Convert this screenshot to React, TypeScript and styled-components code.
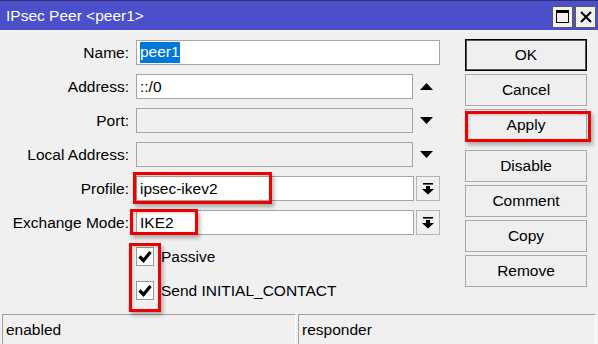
import styled, { createGlobalStyle } from "styled-components";

const GlobalStyle = createGlobalStyle`
  html, body {
    margin: 0;
    padding: 0;
    background: #f0f0f0;
  }
  body {
    font-family: "Liberation Sans", Arial, sans-serif;
    font-size: 15.5px;
    color: #000;
  }
`;

const Window = styled.div`
  position: relative;
  width: 598px;
  height: 344px;
  display: flex;
  flex-direction: column;
  background: #f0f0f0;
  overflow: hidden;
`;

const TitleBar = styled.div`
  height: 30px;
  flex: none;
  display: flex;
  align-items: center;
  justify-content: space-between;
  padding: 0 2px 0 6px;
  background: #4b4fc9;
  border-top: 1px solid #2e2f6e;
  box-sizing: border-box;
  color: #fff;
`;

const TitleText = styled.span`
  font-size: 15.5px;
`;

const WinButtons = styled.div`
  display: flex;
  gap: 2px;
  margin-top: 2px;
`;

const WinButton = styled.div`
  width: 21px;
  height: 22px;
  box-sizing: border-box;
  background: #f0f0f0;
  border: 1px solid #5a5a5a;
  display: flex;
  align-items: center;
  justify-content: center;
`;

const Body = styled.div`
  flex: 1;
  display: flex;
  padding: 10px 0 0 0;
`;

const Form = styled.div`
  width: 440px;
  display: flex;
  flex-direction: column;
  gap: 9px;
`;

const Row = styled.div`
  display: flex;
  align-items: center;
  height: 25px;
`;

const Label = styled.div`
  width: 129px;
  margin-right: 7px;
  text-align: right;
  white-space: nowrap;
`;

const Field = styled.div<{ $width: number; $disabled?: boolean }>`
  width: ${(p) => p.$width}px;
  height: 25px;
  box-sizing: border-box;
  border: 1px solid #a5a5a5;
  background: ${(p) => (p.$disabled ? "#f0f0f0" : "#fff")};
  display: flex;
  align-items: center;
  padding-left: 3px;
  white-space: nowrap;
`;

const Selected = styled.span`
  background: #0078d7;
  color: #fff;
  padding: 1px 0 2px;
`;

const ArrowSlot = styled.div`
  width: 27px;
  height: 25px;
  display: flex;
  align-items: center;
  justify-content: center;
`;

const DropButton = styled.div`
  width: 24px;
  height: 25px;
  margin-left: 2px;
  box-sizing: border-box;
  border: 1px solid #b5b5b5;
  background: #f0f0f0;
  display: flex;
  align-items: center;
  justify-content: center;
`;

const CheckRow = styled.div`
  display: flex;
  align-items: center;
  height: 25px;
  padding-left: 136px;
  gap: 7px;
`;

const CheckBox = styled.div`
  width: 18px;
  height: 19px;
  box-sizing: border-box;
  border: 1px solid #999;
  background: #fff;
  display: flex;
  align-items: center;
  justify-content: center;
`;

const Buttons = styled.div`
  margin-left: 25px;
  margin-top: -1px;
  width: 122px;
  display: flex;
  flex-direction: column;
  gap: 3px;
`;

const Button = styled.div<{ $default?: boolean; $spaced?: boolean }>`
  height: 32px;
  box-sizing: border-box;
  border: 1px solid ${(p) => (p.$default ? "#000" : "#a8a8a8")};
  box-shadow: ${(p) => (p.$default ? "inset 0 0 0 1px #555" : "none")};
  background: #efefef;
  display: flex;
  align-items: center;
  justify-content: center;
  margin-top: ${(p) => (p.$spaced ? "6px" : "0")};
`;

const StatusBar = styled.div`
  height: 30px;
  flex: none;
  display: flex;
  gap: 2px;
  padding: 0 2px 0 2px;
  box-sizing: border-box;
`;

const StatusPanel = styled.div<{ $width: number }>`
  width: ${(p) => p.$width}px;
  box-sizing: border-box;
  border-top: 1px solid #a0a0a0;
  border-left: 1px solid #a0a0a0;
  border-right: 1px solid #fff;
  display: flex;
  align-items: center;
  padding-left: 3px;
`;

const Highlight = styled.div<{ $x: number; $y: number; $w: number; $h: number }>`
  position: absolute;
  left: ${(p) => p.$x}px;
  top: ${(p) => p.$y}px;
  width: ${(p) => p.$w}px;
  height: ${(p) => p.$h}px;
  box-sizing: border-box;
  border: 3px solid #ee0000;
  box-shadow: 2px 3px 4px rgba(0, 0, 0, 0.3), inset 1px 1px 3px rgba(0, 0, 0, 0.2);
  pointer-events: none;
`;

const Triangle = ({ up }: { up?: boolean }) => (
  <svg width="13" height="7" viewBox="0 0 13 7">
    <polygon points={up ? "0,7 13,7 6.5,0" : "0,0 13,0 6.5,7"} fill="#000" />
  </svg>
);

const DropIcon = () => (
  <svg width="12" height="12" viewBox="0 0 12 12">
    <rect x="1" y="0" width="10" height="1.6" fill="#000" />
    <rect x="4" y="3" width="4" height="3" fill="#000" />
    <polygon points="0,6 12,6 6,11.5" fill="#000" />
  </svg>
);

const Check = () => (
  <svg width="14" height="13" viewBox="0 0 14 13">
    <path d="M1.5 6.5 L5.5 10.5 L12.5 2" stroke="#000" strokeWidth="3.2" fill="none" />
  </svg>
);

function App() {
  return (
    <Window>
      <GlobalStyle />
      <TitleBar>
        <TitleText>IPsec Peer &lt;peer1&gt;</TitleText>
        <WinButtons>
          <WinButton>
            <svg width="13" height="13" viewBox="0 0 13 13">
              <rect x="0.5" y="0.5" width="12" height="12" fill="none" stroke="#000" />
              <rect x="0" y="0" width="13" height="3" fill="#000" />
            </svg>
          </WinButton>
          <WinButton>
            <svg width="12" height="12" viewBox="0 0 12 12">
              <path d="M1 1 L11 11 M11 1 L1 11" stroke="#000" strokeWidth="2" />
            </svg>
          </WinButton>
        </WinButtons>
      </TitleBar>
      <Body>
        <Form>
          <Row>
            <Label>Name:</Label>
            <Field $width={304}>
              <Selected>peer1</Selected>
            </Field>
          </Row>
          <Row>
            <Label>Address:</Label>
            <Field $width={277}>::/0</Field>
            <ArrowSlot>
              <Triangle up />
            </ArrowSlot>
          </Row>
          <Row>
            <Label>Port:</Label>
            <Field $width={277} $disabled />
            <ArrowSlot>
              <Triangle />
            </ArrowSlot>
          </Row>
          <Row>
            <Label>Local Address:</Label>
            <Field $width={277} $disabled />
            <ArrowSlot>
              <Triangle />
            </ArrowSlot>
          </Row>
          <Row>
            <Label>Profile:</Label>
            <Field $width={278}>ipsec-ikev2</Field>
            <DropButton>
              <DropIcon />
            </DropButton>
          </Row>
          <Row>
            <Label>Exchange Mode:</Label>
            <Field $width={278}>IKE2</Field>
            <DropButton>
              <DropIcon />
            </DropButton>
          </Row>
          <CheckRow>
            <CheckBox>
              <Check />
            </CheckBox>
            Passive
          </CheckRow>
          <CheckRow>
            <CheckBox>
              <Check />
            </CheckBox>
            Send INITIAL_CONTACT
          </CheckRow>
        </Form>
        <Buttons>
          <Button $default>OK</Button>
          <Button>Cancel</Button>
          <Button>Apply</Button>
          <Button $spaced>Disable</Button>
          <Button>Comment</Button>
          <Button>Copy</Button>
          <Button>Remove</Button>
        </Buttons>
      </Body>
      <StatusBar>
        <StatusPanel $width={294}>enabled</StatusPanel>
        <StatusPanel $width={298}>responder</StatusPanel>
      </StatusBar>
      <Highlight $x={465} $y={111} $w={126} $h={31} />
      <Highlight $x={133} $y={172} $w={139} $h={32} />
      <Highlight $x={130} $y={209} $w={68} $h={26} />
      <Highlight $x={129} $y={243} $w={32} $h={69} />
    </Window>
  );
}

export default App;
